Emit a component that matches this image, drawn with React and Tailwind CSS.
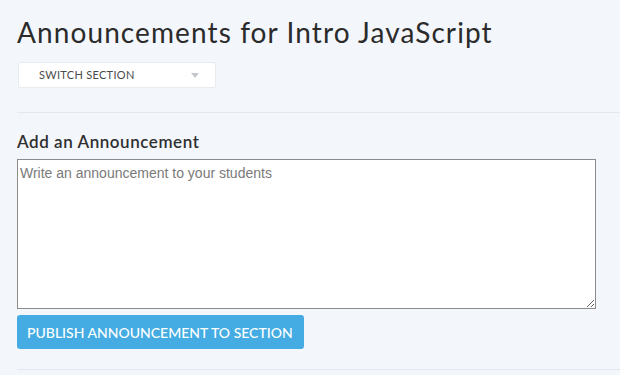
import React from 'react';

const SectionSwitcher = () => (
    <div className="mt-[13px] ml-px w-[198px] h-[26px] bg-white border border-[#e8ecf1] rounded-[2px] flex items-center justify-between pl-[20px] pr-[16px]">
        <span className="text-[11px] text-[#4a4a4a] tracking-[0.3px] uppercase">Switch Section</span>
        <svg width="8" height="5" viewBox="0 0 8 5">
            <path d="M0 0 H8 L4 5 Z" fill="#c3c8cf" />
        </svg>
    </div>
);

const App = () => {
    return (
        <div className="w-[620px] h-[375px] overflow-hidden bg-[#f3f6fb] pl-[17px]" style={{ fontFamily: 'Lato, "Open Sans", sans-serif' }}>
            <h1 className="pt-[15px] text-[28px] leading-[34px] text-[#2b2b2b] font-normal tracking-[1.1px]">
                Announcements for Intro JavaScript
            </h1>
            <SectionSwitcher />
            <div className="mt-[24px] h-px bg-[#e4e8ee]" />
            <h2 className="mt-[18px] text-[17px] leading-[22px] font-semibold text-[#2f2f2f] tracking-[0.55px]">
                Add an Announcement
            </h2>
            <textarea
                className="mt-[6px] block w-[579px] h-[150px] bg-white border border-[#8c8c8c] px-[2px] py-[3px] text-[14px] text-[#333] placeholder:text-[#7a7a7a] outline-none"
                style={{ fontFamily: '"Liberation Sans", Arial, sans-serif' }}
                placeholder="Write an announcement to your students"
            />
            <button className="mt-[6px] w-[287px] h-[34px] bg-[#44ace2] rounded-[3px] text-white text-[14px] font-medium uppercase text-left pl-[10px]">
                Publish Announcement to Section
            </button>
            <div className="mt-[20px] h-px bg-[#e4e8ee]" />
        </div>
    );
};

export default App;
